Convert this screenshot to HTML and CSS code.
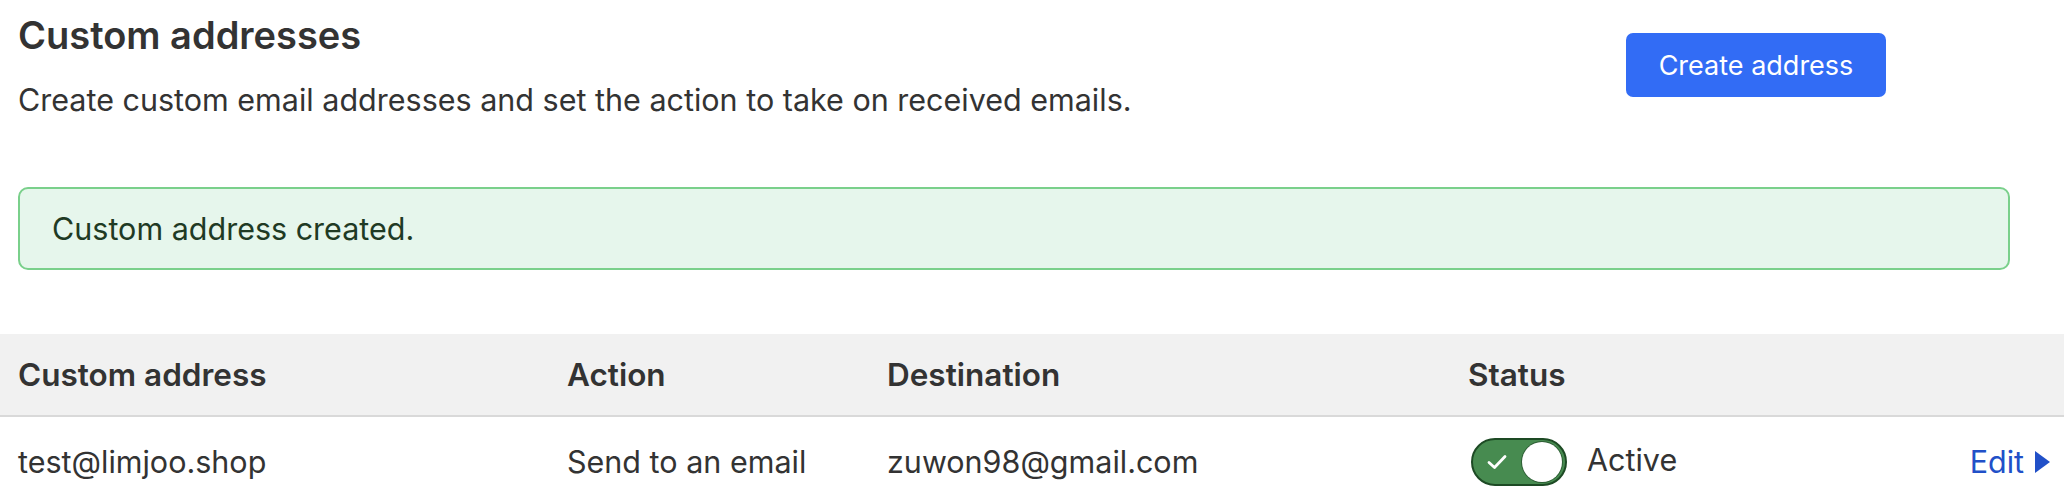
FILE: index.html
```html
<!DOCTYPE html>
<html lang="en">
<head>
<meta charset="utf-8">
<title>Custom addresses</title>
<link rel="stylesheet" href="styles.css">
</head>
<body>
<main class="page">
  <section class="intro">
    <div class="intro-text">
      <h1 class="title">Custom addresses</h1>
      <p class="subtitle">Create custom email addresses and set the action to take on received emails.</p>
    </div>
    <button class="btn-primary" type="button">Create address</button>
  </section>

  <div class="alert">Custom address created.</div>

  <div class="table">
    <div class="row head">
      <div class="cell">Custom address</div>
      <div class="cell">Action</div>
      <div class="cell">Destination</div>
      <div class="cell">Status</div>
      <div class="cell"></div>
    </div>
    <div class="row body">
      <div class="cell">test@limjoo.shop</div>
      <div class="cell">Send to an email</div>
      <div class="cell">zuwon98@gmail.com</div>
      <div class="cell status">
        <span class="toggle">
          <svg class="check" width="24" height="20" viewBox="0 0 24 20"><path d="M4 10.5 L9.5 15.5 L20 4.5" fill="none" stroke="#fff" stroke-width="2.8" stroke-linecap="round" stroke-linejoin="round"/></svg>
          <span class="knob"></span>
        </span>
        <span class="status-label">Active</span>
      </div>
      <div class="cell edit-cell">
        <a class="edit" href="#">Edit<svg class="caret" width="18" height="24" viewBox="0 0 18 24"><path d="M2 1 L17 12 L2 23 Z" fill="#2150c8"/></svg></a>
      </div>
    </div>
  </div>
</main>
</body>
</html>
```

FILE: styles.css
```css
* { box-sizing: border-box; }

body {
  margin: 0;
  background: #ffffff;
  color: #333333;
  font-family: Inter, "Noto Sans", sans-serif;
}

.page {
  display: flex;
  flex-direction: column;
}

.intro {
  display: flex;
  justify-content: space-between;
  align-items: flex-start;
  padding: 0 178px 0 18px;
}

.title {
  margin: 12px 0 0;
  font-size: 38px;
  line-height: 46px;
  font-weight: 600;
  color: #333333;
}

.subtitle {
  margin: 24px 0 0;
  font-size: 30.5px;
  line-height: 36px;
  font-weight: 400;
  color: #333333;
}

.btn-primary {
  margin-top: 33px;
  width: 260px;
  height: 64px;
  border: 0;
  border-radius: 7px;
  background: #326cf5;
  color: #ffffff;
  font-family: inherit;
  font-size: 27px;
  font-weight: 400;
}

.alert {
  margin: 69px 54px 0 18px;
  height: 83px;
  display: flex;
  align-items: center;
  padding: 0 32px;
  border: 2px solid #7ad08b;
  border-radius: 10px;
  background: #e6f6ec;
  color: #1f3a24;
  font-size: 30.5px;
  line-height: 36px;
}

.table {
  margin-top: 64px;
  display: flex;
  flex-direction: column;
}

.row {
  display: grid;
  grid-template-columns: 549px 320px 581px 1fr auto;
  align-items: center;
}

.row.head {
  height: 83px;
  background: #f1f1f1;
  border-bottom: 2px solid #d9d9d9;
  font-weight: 600;
}

.row.head .cell {
  font-size: 31.5px;
}

.row.body {
  height: 90px;
}

.cell {
  padding: 0 18px;
  font-size: 30.5px;
  line-height: 36px;
  white-space: nowrap;
}

.status {
  display: flex;
  align-items: center;
  gap: 20px;
  padding-left: 21px;
}

.toggle {
  display: inline-flex;
  align-items: center;
  justify-content: space-between;
  width: 96px;
  height: 48px;
  border-radius: 24px;
  background: #478b50;
  border: 2px solid #1d4a24;
  padding: 0 3px 0 12px;
}

.check {
  display: block;
}

.knob {
  width: 40px;
  height: 40px;
  border-radius: 50%;
  background: #ffffff;
  box-shadow: 0 0 0 1px #2e5e35;
}

.status-label {
  color: #333333;
  margin-top: -4px;
}

.edit-cell {
  padding: 0 13px 0 0;
}

.edit {
  display: inline-flex;
  align-items: center;
  gap: 9px;
  color: #2150c8;
  text-decoration: none;
}

.caret {
  display: block;
}
```
